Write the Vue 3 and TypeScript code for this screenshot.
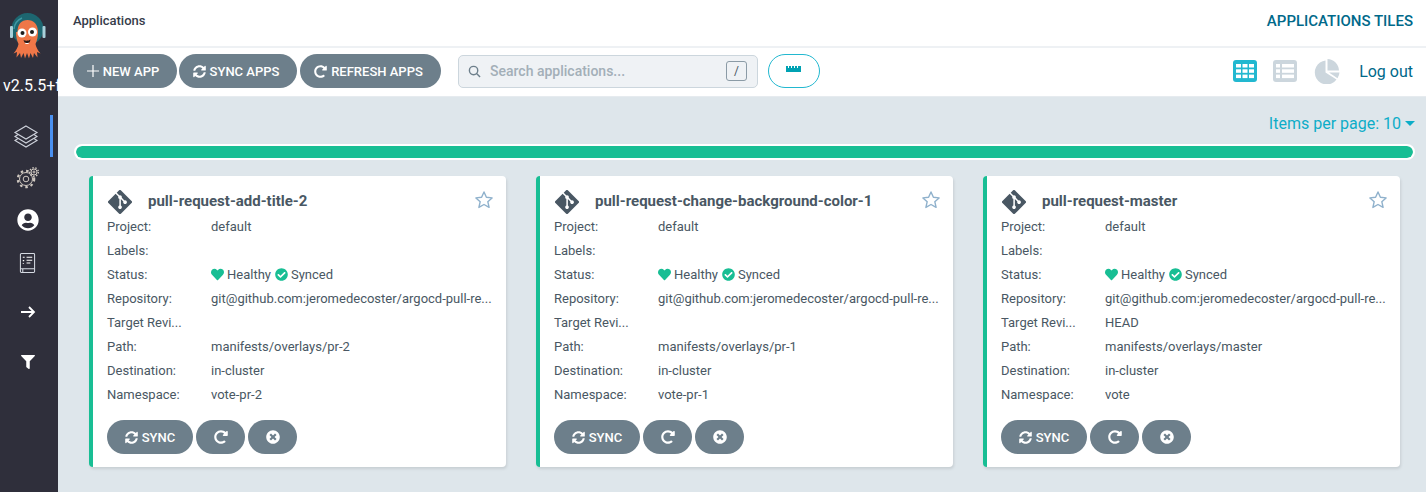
<script setup lang="ts">
interface AppTile {
  name: string;
  revision: string;
  path: string;
  namespace: string;
}

const REPO = 'git@github.com:jeromedecoster/argocd-pull-re...';

const apps: AppTile[] = [
  { name: 'pull-request-add-title-2', revision: '', path: 'manifests/overlays/pr-2', namespace: 'vote-pr-2' },
  { name: 'pull-request-change-background-color-1', revision: '', path: 'manifests/overlays/pr-1', namespace: 'vote-pr-1' },
  { name: 'pull-request-master', revision: 'HEAD', path: 'manifests/overlays/master', namespace: 'vote' },
];

const SYNC_PATH = 'M370.72 133.28C339.458 104.008 298.888 87.962 255.848 88c-77.458.068-144.328 53.178-162.791 126.85-1.344 5.363-6.122 9.15-11.651 9.15H24.103c-7.498 0-13.194-6.807-11.807-14.176C33.933 94.924 134.813 8 256 8c66.448 0 126.791 26.136 171.315 68.685L463.03 40.97C478.149 25.851 504 36.559 504 57.941V192c0 13.255-10.745 24-24 24H345.941c-21.382 0-32.09-25.851-16.971-40.971l41.75-41.749zM32 296h134.059c21.382 0 32.09 25.851 16.971 40.971l-41.75 41.75c31.262 29.273 71.835 45.319 114.876 45.28 77.418-.07 144.315-53.144 162.787-126.849 1.344-5.363 6.122-9.15 11.651-9.15h57.304c7.498 0 13.194 6.807 11.807 14.176C478.067 417.076 377.187 504 256 504c-66.448 0-126.791-26.136-171.315-68.685L48.97 471.03C33.851 486.149 8 475.441 8 454.059V320c0-13.255 10.745-24 24-24z';
const REDO_PATH = 'M256.455 8c66.269.119 126.437 26.233 170.859 68.685l35.715-35.715C478.149 25.851 504 36.559 504 57.941V192c0 13.255-10.745 24-24 24H345.941c-21.382 0-32.09-25.851-16.971-40.971l41.75-41.75c-30.864-28.899-70.801-44.907-113.23-45.273-92.398-.798-170.283 73.977-169.484 169.442C88.764 348.009 162.184 424 256 424c41.127 0 79.997-14.678 110.629-41.556 4.743-4.161 11.906-3.908 16.368.553l39.662 39.662c4.872 4.872 4.631 12.815-.482 17.433C378.202 479.813 319.926 504 256 504 119.034 504 8.001 392.967 8 256.002 7.999 119.193 119.646 7.755 256.455 8z';
const HEART_PATH = 'M462.3 62.6C407.5 15.9 326 24.3 275.7 76.2L256 96.5l-19.7-20.3C186.1 24.3 104.5 15.9 49.7 62.6c-62.8 53.6-66.1 149.8-9.9 207.9l193.5 199.8c12.5 12.9 32.8 12.9 45.3 0l193.5-199.8c56.3-58.1 53-154.3-9.8-207.9z';
const CHECK_PATH = 'M504 256c0 136.967-111.033 248-248 248S8 392.967 8 256 119.033 8 256 8s248 111.033 248 248zM227.314 387.314l184-184c6.248-6.248 6.248-16.379 0-22.627l-22.627-22.627c-6.248-6.249-16.379-6.249-22.628 0L216 308.118l-70.059-70.059c-6.248-6.248-16.379-6.248-22.628 0l-22.627 22.627c-6.248 6.248-6.248 16.379 0 22.627l104 104c6.249 6.249 16.379 6.249 22.628.001z';
const TIMES_PATH = 'M256 8C119 8 8 119 8 256s111 248 248 248 248-111 248-248S393 8 256 8zm121.6 313.1c4.7 4.7 4.7 12.3 0 17L338 377.6c-4.7 4.7-12.3 4.7-17 0L256 312l-65.1 65.6c-4.7 4.7-12.3 4.7-17 0L134.4 338c-4.7-4.7-4.7-12.3 0-17l65.6-65-65.6-65.1c-4.7-4.7-4.7-12.3 0-17l39.6-39.6c4.7-4.7 12.3-4.7 17 0l65 65.7 65.1-65.6c4.7-4.7 12.3-4.7 17 0l39.6 39.6c4.7 4.7 4.7 12.3 0 17L312 256l65.6 65.1z';
const GIT_PATH = 'M439.55 236.05L244 40.45a28.87 28.87 0 0 0-40.81 0l-40.66 40.63 51.52 51.52c27.06-9.14 52.68 16.77 43.39 43.68l49.66 49.66c34.23-11.8 61.18 31 35.47 56.69-26.49 26.49-70.21-2.87-56-37.34L240.22 199v121.85c25.3 12.54 22.26 41.85 9.08 55a34.34 34.34 0 0 1-48.55 0c-17.57-17.6-11.07-46.91 11.25-56v-123c-20.8-8.51-24.6-30.74-18.64-45L142.57 101 8.45 235.14a28.86 28.86 0 0 0 0 40.81l195.61 195.6a28.86 28.86 0 0 0 40.8 0l194.69-194.69a28.86 28.86 0 0 0 0-40.81z';
const USER_PATH = 'M248 8C111 8 0 119 0 256s111 248 248 248 248-111 248-248S385 8 248 8zm0 96c48.6 0 88 39.4 88 88s-39.4 88-88 88-88-39.4-88-88 39.4-88 88-88zm0 344c-58.7 0-111.3-26.6-146.5-68.2 18.8-35.4 55.6-59.8 98.5-59.8 2.4 0 4.8.4 7.1 1.1 13 4.2 26.6 6.9 40.9 6.9 14.3 0 28-2.7 40.9-6.9 2.3-.7 4.7-1.1 7.1-1.1 42.9 0 79.7 24.4 98.5 59.8C359.3 421.4 306.7 448 248 448z';
const FILTER_PATH = 'M487.976 0H24.028C2.71 0-8.047 25.866 7.058 40.971L192 225.941V432c0 7.831 3.821 15.17 10.237 19.662l80 55.98C298.02 518.69 320 507.493 320 487.98V225.941l184.947-184.97C520.021 25.896 509.338 0 487.976 0z';
</script>

<template>
  <div class="page">
    <aside class="sidebar">
      <svg class="logo" viewBox="0 0 38 48" width="38" height="48">
        <circle cx="18.500" cy="16" r="16" fill="#1d6670" />
        <path d="M5 16a13.500 13.500 0 0 1 8-11" fill="none" stroke="#3d98a3" stroke-width="1.500" />
        <rect x="1" y="13" width="3" height="12" rx="1" fill="#a9d0da" />
        <rect x="33.500" y="13" width="3" height="12" rx="1" fill="#a9d0da" />
        <path d="M8.500 19C8.500 11 12.500 7 18.500 7s10.500 4 10.500 12c0 5-1 9-2.500 12 .5 3 2 6 5 9.500l-3.500-1.500 .5 5.500-3.500-4.500-1 5-2.500-5-1.500 5.500-2-5.500-2 5.500-1.500-5.500-2.500 5-1-5-3.500 4.500 .5-5.500-3.500 1.500c3-3.500 4.500-6.500 5-9.500-1.500-3-2.500-7-2.500-12z" fill="#ef7748" />
        <circle cx="13" cy="20" r="4.500" fill="#fff" />
        <circle cx="23.500" cy="19" r="4.500" fill="#fff" />
        <circle cx="13.500" cy="20" r="2" fill="#1d1d1d" />
        <circle cx="23" cy="19" r="2" fill="#1d1d1d" />
        <path d="M14.500 27c2 1 5 1 7-.5-.5 3-2 4-3.500 4s-3-1-3.500-3.500z" fill="#2a1a16" />
        <path d="M16 29.500c1 .8 3 .8 4 0l-.5 1.500h-3z" fill="#fff" />
      </svg>
      <div class="version">v2.5.5+f</div>

      <nav class="nav">
        <div class="nav-item active">
          <svg viewBox="0 0 26 24" width="26" height="24" fill="none" stroke="#cfd3dc" stroke-width="1.100">
            <path d="M13 2l11 6.500-11 6.500L2 8.500z" />
            <path d="M5 10.500l-3 2 11 6.500 11-6.500-3-2" />
            <path d="M5 14.500l-3 2 11 6.500 11-6.500-3-2" />
          </svg>
        </div>
        <div class="nav-item">
          <svg viewBox="0 0 24 24" width="24" height="24" fill="none" stroke="#cfc8c0" stroke-width="1">
            <circle cx="10" cy="13" r="6.500" />
            <circle cx="10" cy="13" r="8.200" stroke-dasharray="2.500 3" stroke-width="2.200" />
            <circle cx="10" cy="13" r="2.800" />
            <circle cx="18" cy="6" r="3" fill="#2f2f3b" />
            <circle cx="18" cy="6" r="4.300" stroke-dasharray="1.500 1.500" stroke-width="1.400" />
            <circle cx="18" cy="6" r="1" />
          </svg>
        </div>
        <div class="nav-item">
          <svg viewBox="0 0 496 512" width="22" height="22"><path :d="USER_PATH" fill="#fff" /></svg>
        </div>
        <div class="nav-item book">
          <svg viewBox="0 0 18 22" width="17" height="22" fill="none" stroke="#d5dae2" stroke-width="1.100">
            <path d="M2.500 1h13a1 1 0 0 1 1 1v18a1 1 0 0 1-1 1h-13a1 1 0 0 1-1-1V2a1 1 0 0 1 1-1z" />
            <path d="M1.500 17h15M4 17v4" />
            <path d="M8 5h6M8 8h6M8 11h4M4 5h2M4 8.500h1.500M4 11.500h1" stroke="#fff" />
          </svg>
        </div>
        <div class="nav-item spaced">
          <svg viewBox="0 0 16 14" width="16" height="14" fill="none" stroke="#fff" stroke-width="1.800">
            <path d="M1 7h13M9 2l5 5-5 5" />
          </svg>
        </div>
        <div class="nav-item spaced">
          <svg viewBox="0 0 512 512" width="14" height="14"><path :d="FILTER_PATH" fill="#fff" /></svg>
        </div>
      </nav>
    </aside>

    <main class="main">
      <header class="topbar">
        <span class="title">Applications</span>
        <span class="view-name">APPLICATIONS TILES</span>
      </header>

      <div class="toolbar">
        <div class="actions">
          <button class="btn new-app">
            <svg viewBox="0 0 12 12" width="12" height="12" fill="none" stroke="#fff" stroke-width="1.200"><path d="M6 0v12M0 6h12" /></svg>
            NEW APP
          </button>
          <button class="btn sync-apps">
            <svg viewBox="0 0 512 512" width="13" height="13"><path :d="SYNC_PATH" fill="#fff" /></svg>
            SYNC APPS
          </button>
          <button class="btn refresh-apps">
            <svg viewBox="0 0 512 512" width="13" height="13"><path :d="REDO_PATH" fill="#fff" /></svg>
            REFRESH APPS
          </button>
        </div>

        <div class="search">
          <svg viewBox="0 0 14 14" width="13" height="13" fill="none" stroke="#6d7f8b" stroke-width="1.500">
            <circle cx="6" cy="6" r="4.500" /><path d="M9.500 9.500L13 13" />
          </svg>
          <span class="placeholder">Search applications...</span>
          <span class="kbd">/</span>
        </div>

        <button class="ruler-btn">
          <svg viewBox="0 0 16 6" width="16" height="6">
            <path d="M0 0h2v2h1V0h2v2h1V0h2v2h1V0h2v2h1V0h3v6H0z" fill="#00a2b3" />
          </svg>
        </button>

        <div class="views">
          <svg viewBox="0 0 24 22" width="24" height="22">
            <rect width="24" height="22" rx="3" fill="#22b8d0" />
            <g fill="#fff">
              <rect x="3" y="4" width="5" height="3.500" /><rect x="9.500" y="4" width="5" height="3.500" /><rect x="16" y="4" width="5" height="3.500" />
              <rect x="3" y="9.300" width="5" height="3.500" /><rect x="9.500" y="9.300" width="5" height="3.500" /><rect x="16" y="9.300" width="5" height="3.500" />
              <rect x="3" y="14.600" width="5" height="3.500" /><rect x="9.500" y="14.600" width="5" height="3.500" /><rect x="16" y="14.600" width="5" height="3.500" />
            </g>
          </svg>
          <svg viewBox="0 0 24 22" width="24" height="22">
            <rect width="24" height="22" rx="3" fill="#ccd6dd" />
            <g fill="#fff">
              <rect x="3" y="4" width="4" height="3.500" /><rect x="9" y="4" width="12" height="3.500" />
              <rect x="3" y="9.300" width="4" height="3.500" /><rect x="9" y="9.300" width="12" height="3.500" />
              <rect x="3" y="14.600" width="4" height="3.500" /><rect x="9" y="14.600" width="12" height="3.500" />
            </g>
          </svg>
          <svg class="pie" viewBox="0 0 26 25" width="26" height="25" fill="#ccd6dd">
            <path d="M11.500 1.500A12 12 0 1 0 22.500 20.500L11.500 13.500z" />
            <path d="M13.500 0a12 12 0 0 1 11.500 11.500H13.500z" />
            <path d="M25.500 13.500a12 12 0 0 1-2 5.700L15 13.500z" />
          </svg>
          <span class="logout">Log out</span>
        </div>
      </div>

      <section class="content">
        <div class="paging">
          Items per page: 10
          <span class="caret"></span>
        </div>
        <div class="progress"><div class="progress-fill"></div></div>

        <div class="tiles">
          <article v-for="app in apps" :key="app.name" class="tile">
            <div class="tile-head">
              <svg class="git" viewBox="0 32 448 448" width="24" height="24"><path :d="GIT_PATH" fill="#495763" /></svg>
              <span class="tile-name">{{ app.name }}</span>
              <svg class="star" viewBox="0 0 20 20" width="20" height="20" fill="none" stroke="#8fb1cc" stroke-width="1.400">
                <path d="M10 2l2.400 5.300 5.700.6-4.300 3.800 1.300 5.700L10 14.500l-5.100 2.900 1.300-5.700L1.900 7.900l5.700-.6z" stroke-linejoin="round" />
              </svg>
            </div>
            <div class="row"><span class="label">Project:</span><span class="value">default</span></div>
            <div class="row"><span class="label">Labels:</span><span class="value"></span></div>
            <div class="row">
              <span class="label">Status:</span>
              <span class="value status">
                <svg viewBox="0 0 512 512" width="13" height="13"><path :d="HEART_PATH" fill="#18be94" /></svg>
                <span>Healthy</span>
                <svg viewBox="0 0 512 512" width="13" height="13"><path :d="CHECK_PATH" fill="#18be94" /></svg>
                <span>Synced</span>
              </span>
            </div>
            <div class="row"><span class="label">Repository:</span><span class="value">{{ REPO }}</span></div>
            <div class="row"><span class="label">Target Revi...</span><span class="value">{{ app.revision }}</span></div>
            <div class="row"><span class="label">Path:</span><span class="value">{{ app.path }}</span></div>
            <div class="row"><span class="label">Destination:</span><span class="value">in-cluster</span></div>
            <div class="row"><span class="label">Namespace:</span><span class="value">{{ app.namespace }}</span></div>
            <div class="tile-actions">
              <button class="btn tile-sync">
                <svg viewBox="0 0 512 512" width="13" height="13"><path :d="SYNC_PATH" fill="#fff" /></svg>
                SYNC
              </button>
              <button class="btn tile-icon">
                <svg viewBox="0 0 512 512" width="14" height="14"><path :d="REDO_PATH" fill="#fff" /></svg>
              </button>
              <button class="btn tile-icon">
                <svg viewBox="0 0 512 512" width="14" height="14"><path :d="TIMES_PATH" fill="#fff" /></svg>
              </button>
            </div>
          </article>
        </div>
      </section>
    </main>
  </div>
</template>

<style scoped>
.page {
  display: flex;
  width: 1426px;
  height: 492px;
  overflow: hidden;
  font-family: Roboto, "Liberation Sans", sans-serif;
  color: #495763;
}
.sidebar {
  flex: 0 0 58px;
  width: 58px;
  background: #2f2f3b;
  overflow: hidden;
  display: flex;
  flex-direction: column;
}
.logo {
  display: block;
  margin: 13px 0 0 9px;
  flex: none;
}
.version {
  margin: 15px 0 0 3px;
  color: #fff;
  font-size: 16px;
  line-height: 20px;
  white-space: nowrap;
}
.nav {
  margin-top: 19px;
  display: flex;
  flex-direction: column;
}
.nav-item {
  position: relative;
  height: 42px;
  display: flex;
  align-items: center;
  justify-content: center;
  padding-right: 3px;
}
.nav-item.active {
  padding-right: 6px;
}
.nav-item.active::after {
  content: "";
  position: absolute;
  top: 0;
  right: 5px;
  width: 3px;
  height: 42px;
  background: #4a90f0;
}
.nav-item.book {
  height: 44px;
  padding-right: 4px;
}
.nav-item.spaced {
  height: 50px;
}
.book + .spaced {
  margin-top: 2px;
}
.main {
  flex: 1;
  min-width: 0;
  display: flex;
  flex-direction: column;
  background: #dee6eb;
}
.topbar {
  height: 46px;
  flex: none;
  background: #fff;
  display: flex;
  align-items: center;
  justify-content: space-between;
  padding: 0 13px 5px 15px;
  box-sizing: border-box;
}
.title {
  font-size: 13px;
  font-weight: 500;
  color: #363c4a;
}
.view-name {
  font-size: 15px;
  font-weight: 500;
  color: #00698a;
}
.toolbar {
  height: 51px;
  flex: none;
  box-sizing: border-box;
  background: #fff;
  border-top: 2px solid #eef1f4;
  border-bottom: 1px solid #e6ebef;
  display: flex;
  align-items: center;
  padding: 0 13px 2px 15px;
}
.actions {
  display: flex;
  gap: 2px;
}
.btn {
  height: 34px;
  border: 0;
  border-radius: 17px;
  background: #6d7f8b;
  color: #fff;
  font-family: inherit;
  font-size: 13px;
  font-weight: 500;
  display: inline-flex;
  align-items: center;
  justify-content: center;
  gap: 4px;
  padding: 0;
}
.new-app { width: 104px; padding-right: 4px; }
.sync-apps { width: 118px; padding-right: 4px; }
.refresh-apps { width: 141px; margin-left: 1px; padding-right: 4px; }
.search {
  width: 300px;
  height: 33px;
  margin-left: 17px;
  box-sizing: border-box;
  background: #eff2f5;
  border: 1px solid #ccd6dd;
  border-radius: 5px;
  display: flex;
  align-items: center;
  padding: 0 10px 0 9px;
}
.placeholder {
  flex: 1;
  margin-left: 9px;
  font-size: 14px;
  font-weight: 500;
  color: #a3afb8;
}
.kbd {
  width: 21px;
  height: 20px;
  box-sizing: border-box;
  border: 1px solid #8b9ba6;
  border-radius: 3px;
  font-size: 12px;
  line-height: 18px;
  text-align: center;
  color: #495763;
}
.ruler-btn {
  width: 52px;
  height: 34px;
  margin-left: 10px;
  background: #fff;
  border: 1px solid #22b8d0;
  border-radius: 17px;
  display: flex;
  align-items: center;
  justify-content: center;
  padding: 0 0 4px;
}
.views {
  margin-left: auto;
  display: flex;
  align-items: center;
  gap: 16px;
}
.pie {
  margin-left: 1px;
}
.logout {
  margin-left: 3px;
  font-size: 16px;
  color: #00698a;
}
.content {
  flex: 1;
  padding: 16px 11px 0 16px;
  min-height: 0;
}
.paging {
  display: flex;
  justify-content: flex-end;
  align-items: center;
  gap: 4px;
  height: 20px;
  font-size: 16px;
  color: #0dadc8;
}
.caret {
  width: 0;
  height: 0;
  border-left: 5px solid transparent;
  border-right: 5px solid transparent;
  border-top: 5px solid #0dadc8;
}
.progress {
  margin: 11px 0 0;
  height: 16px;
  box-sizing: border-box;
  border: 2px solid #fff;
  border-radius: 8px;
  overflow: hidden;
}
.progress-fill {
  height: 100%;
  border-radius: 6px;
  background: #18be94;
}
.tiles {
  display: flex;
  gap: 30px;
  margin: 16px 0 0 15px;
}
.tile {
  width: 417px;
  height: 291px;
  flex: none;
  box-sizing: border-box;
  background: #fff;
  border-left: 4px solid #18be94;
  border-radius: 4px;
  box-shadow: 1px 2px 3px rgba(0, 0, 0, 0.1);
  padding: 11px 14px 0;
  font-size: 13px;
}
.tile-head {
  height: 27px;
  display: flex;
  align-items: center;
}
.git {
  flex: none;
  margin: 3px 0 0 1px;
}
.tile-name {
  margin-left: 16px;
  font-size: 15px;
  font-weight: 700;
  color: #495763;
  flex: 1;
}
.star {
  flex: none;
  margin: -1px -2px 0 0;
}
.row {
  display: flex;
  height: 24px;
  align-items: center;
  white-space: nowrap;
}
.label {
  width: 104px;
  flex: none;
}
.status {
  display: inline-flex;
  align-items: center;
  gap: 3px;
}
.status svg + span + svg {
  margin-left: 1px;
}
.tile-actions {
  display: flex;
  gap: 3px;
  margin-top: 14px;
}
.tile-sync { width: 86px; }
.tile-icon { width: 49px; }
</style>

<style>
html, body {
  margin: 0;
  overflow: hidden;
}
</style>
